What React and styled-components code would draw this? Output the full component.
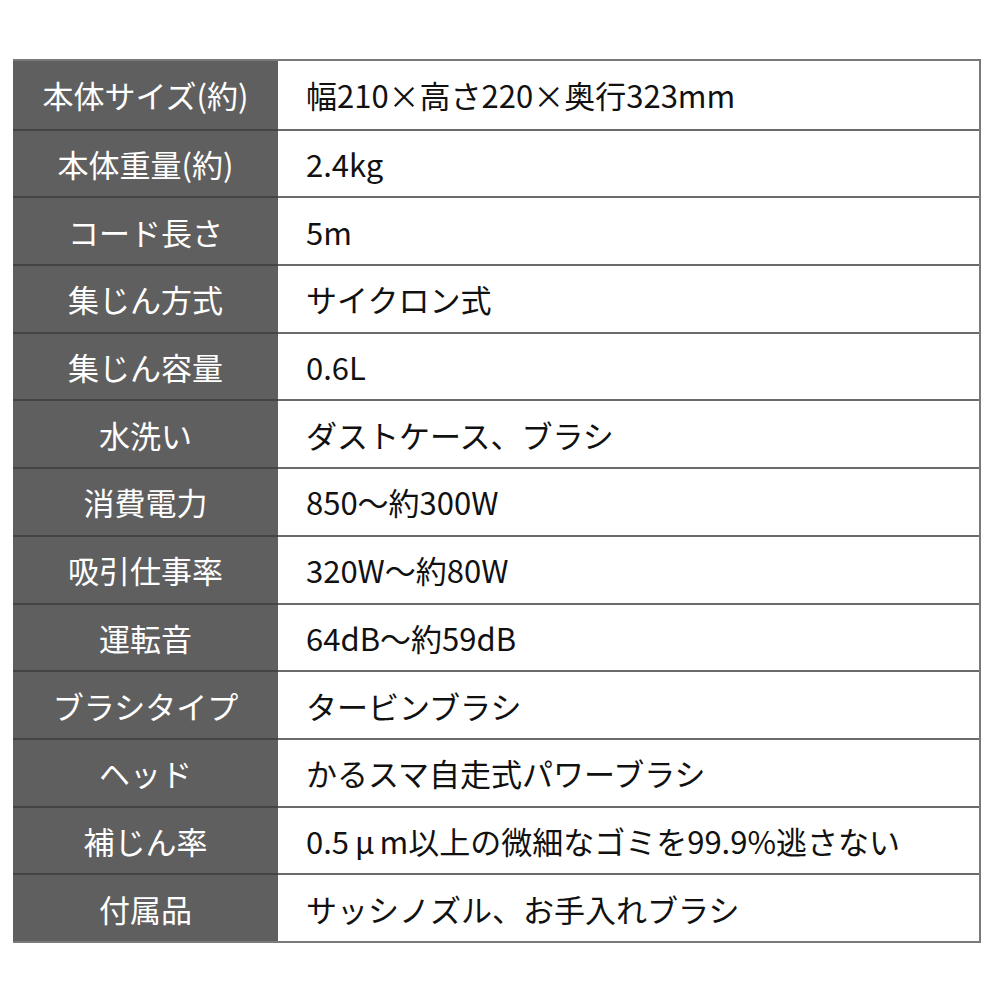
import React from 'react';
import styled, { createGlobalStyle } from "styled-components";

const specs = [
    ["本体サイズ(約)", "幅210×高さ220×奥行323mm"],
    ["本体重量(約)", "2.4kg"],
    ["コード長さ", "5m"],
    ["集じん方式", "サイクロン式"],
    ["集じん容量", "0.6L"],
    ["水洗い", "ダストケース、ブラシ"],
    ["消費電力", "850〜約300W"],
    ["吸引仕事率", "320W〜約80W"],
    ["運転音", "64dB〜約59dB"],
    ["ブラシタイプ", "タービンブラシ"],
    ["ヘッド", "かるスマ自走式パワーブラシ"],
    ["補じん率", <>0.5<Micro>μ</Micro>m以上の微細なゴミを99.9%逃さない</>],
    ["付属品", "サッシノズル、お手入れブラシ"],
];

function Micro({ children }) {
    return <MicroSign>{children}</MicroSign>;
}

const GlobalStyle = createGlobalStyle`
    html, body{
        margin: 0;
        padding: 0;
        background: #ffffff;
    }
    body{
        font-family: "Noto Sans CJK JP", "Noto Sans", sans-serif;
    }
`;

const Page = styled.div`
    width: 1000px;
    height: 1000px;
    padding: 59px 19px 0 13px;
    box-sizing: border-box;
`;

const Table = styled.div`
    display: flex;
    flex-direction: column;
    border-top: 2px solid #7a7a7a;
    border-right: 2px solid #7a7a7a;
    border-bottom: 2px solid #7a7a7a;
`;

const Row = styled.div`
    display: grid;
    grid-template-columns: 265px 1fr;
    height: 67.7px;
    border-top: ${(p) => (p.$first ? "none" : "2px solid #6a6a6a")};
    box-sizing: border-box;
`;

const Label = styled.div`
    background: #5f5f5f;
    color: #ffffff;
    display: flex;
    align-items: center;
    justify-content: center;
    font-size: 31px;
    margin-top: ${(p) => (p.$first ? "0" : "-2px")};
    border-top: ${(p) => (p.$first ? "none" : "2px solid #444444")};
`;

const Value = styled.div`
    color: #111111;
    display: flex;
    align-items: center;
    padding-left: 28px;
    font-size: 31px;
    white-space: nowrap;
`;

const MicroSign = styled.span`
    display: inline-block;
    padding: 0 5px 0 6px;
`;

const App = () => {
    return (
        <>
            <GlobalStyle />
            <Page>
                <Table>
                    {specs.map(([label, value], i) => (
                        <Row key={label} $first={i === 0}>
                            <Label $first={i === 0}>{label}</Label>
                            <Value>{value}</Value>
                        </Row>
                    ))}
                </Table>
            </Page>
        </>
    );
};

export default App;
